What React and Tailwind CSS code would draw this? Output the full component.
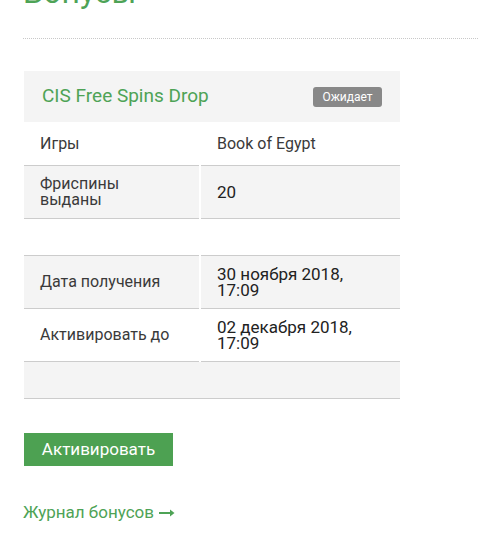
import { useState } from 'react';

const rows = [
  { label: 'Игры', value: 'Book of Egypt', h: 'h-[44px]', light: true },
  { label: 'Фриспины выданы', value: '20', h: 'h-[53px]' },
  { label: '', value: '', h: 'h-[37px]' },
  { label: 'Дата получения', value: '30 ноября 2018, 17:09', h: 'h-[53px]' },
  { label: 'Активировать до', value: '02 декабря 2018, 17:09', h: 'h-[53px]' },
];

const BonusPage = () => {
  const [status] = useState('Ожидает');

  return (
    <div className="min-h-[533px] bg-white pl-[23px] font-['Roboto',sans-serif] overflow-hidden">
      {/* Page title */}
      <h1 className="-mt-[26px] text-[32px] leading-[36px] text-[#4ea356]">Бонусы</h1>

      <div className="mt-[28px] border-b border-dotted border-[#c8c8c8]" />

      {/* Bonus card */}
      <div className="mt-[32px] ml-px w-[376px]">
        <div className="flex h-[51px] items-center justify-between bg-[#f4f4f4] pl-[18px] pr-[18px]">
          <span className="text-[19px] text-[#4ea356]">CIS Free Spins Drop</span>
          <span className="flex h-[20px] w-[69px] items-center justify-center rounded-[3px] bg-[#888888] text-[12px] text-white">
            {status}
          </span>
        </div>

        {rows.map((row, i) => (
          <div
            key={i}
            className={`grid grid-cols-[175px_199px] gap-x-[2px] ${row.h}`}
          >
            <div
              className={`flex items-center border-b border-[#cccccc] px-[16px] text-[16px] leading-[16px] text-[#3a3a3a] ${
                i % 2 === 1 ? 'bg-[#f4f4f4]' : 'bg-white'
              }`}
            >
              {row.label}
            </div>
            <div
              className={`flex items-center border-b border-[#cccccc] px-[16px] leading-[16px] ${
                row.light ? 'text-[16px] text-[#3a3a3a]' : 'text-[17px] text-[#222222]'
              } ${i % 2 === 1 ? 'bg-[#f4f4f4]' : 'bg-white'}`}
            >
              {row.value}
            </div>
          </div>
        ))}

        {/* empty footer row */}
        <div className="h-[37px] border-b border-[#cccccc] bg-[#f4f4f4]" />
      </div>

      <button className="mt-[34px] ml-px flex h-[33px] w-[149px] items-center justify-center bg-[#4da152] text-[17px] text-white">
        Активировать
      </button>

      <a href="#" className="mt-[34px] flex items-center gap-[5px] text-[17px] text-[#4ea356]">
        Журнал бонусов
        <svg width="16" height="8" viewBox="0 0 16 8" fill="none">
          <path d="M0 4h13" stroke="#4ea356" strokeWidth="2" />
          <path d="M11 0.5L15.5 4L11 7.5Z" fill="#4ea356" />
        </svg>
      </a>
    </div>
  );
};

export default function App() {
  return <BonusPage />;
}
